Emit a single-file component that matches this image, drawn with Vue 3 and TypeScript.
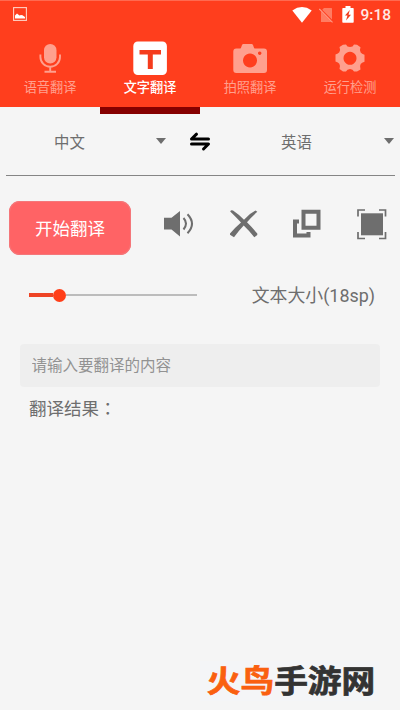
<script setup lang="ts">
import { ref } from 'vue'

interface Tab { id: string; label: string }
const tabs: Tab[] = [
  { id: 'voice', label: '语音翻译' },
  { id: 'text', label: '文字翻译' },
  { id: 'photo', label: '拍照翻译' },
  { id: 'check', label: '运行检测' },
]
const active = ref('text')
const size = ref(18)
const source = ref('')
</script>

<template>
  <div class="screen">
    <header class="header">
      <div class="status">
        <svg class="shot" width="14" height="14" viewBox="0 0 14 14">
          <rect x=".6" y=".6" width="12.8" height="12.8" fill="none" stroke="#ffd0c4" stroke-width="1.1" />
          <path d="M2 11.5V8.500l2-2 2.500 2L8 8l1.500.3L12 10v1.500z" fill="#fff" />
        </svg>
        <svg class="wifi" width="20" height="16" viewBox="0 0 20 16">
          <path d="M.3 3.500Q10-3.400 19.700 3.500L10 15.800z" fill="#fff" />
        </svg>
        <svg class="sim" width="15" height="16" viewBox="0 0 15 16">
          <path d="M5 1h7.500q.5 0 .5.500V15H2V4z" fill="#ff7c62" />
          <path d="M.5 1.500L14 15" stroke="#ff3e1f" stroke-width="2" />
          <path d="M.3 2L13.500 15.400" stroke="#ff9a85" stroke-width="1.100" />
        </svg>
        <svg class="battery" width="12" height="17" viewBox="0 0 12 17">
          <path d="M3.500 0h5v2H11q.7 0 .7.700V16q0 .7-.7.700H1q-.7 0-.7-.7V2.700Q.3 2 1 2h2.500z" fill="#fff" />
          <path d="M7.800 4L3 9.500h2.500L4 14.500 9 8.700H6.500z" fill="#f03a1c" />
        </svg>
        <span class="clock">9:18</span>
      </div>
      <nav class="tabs">
        <button v-for="tab in tabs" :key="tab.id" class="tab" :class="{ active: active === tab.id }" @click="active = tab.id">
          <svg v-if="tab.id === 'voice'" width="36" height="36" viewBox="0 0 36 36">
            <rect x="12" y="4" width="12.500" height="19.500" rx="6.200" fill="currentColor" />
            <path d="M8.400 14.500v2.500a9.800 9.800 0 0 0 19.600 0v-2.500M18.200 26.500v5M12.500 31.800h11.500" fill="none" stroke="currentColor" stroke-width="1.900" />
          </svg>
          <svg v-else-if="tab.id === 'text'" width="36" height="36" viewBox="0 0 36 36">
            <rect x="1.300" y="1.500" width="33.600" height="33.500" rx="4.500" fill="currentColor" />
            <path d="M7.500 10h21.500v4.500H20.800V29h-5V14.500H7.500z" fill="#f53c1d" />
          </svg>
          <svg v-else-if="tab.id === 'photo'" width="36" height="36" viewBox="0 0 36 36">
            <path fill-rule="evenodd" d="M4.300 8.500H8q1 0 1.300-1.500l.7-2q.4-1 1.500-1h8q1.100 0 1.500 1l.7 2q.3 1.500 1.300 1.500h9q3 0 3 3v18.500q0 3-3 3H4.300q-3 0-3-3V11.500q0-3 3-3zM18 13.500a7 7 0 1 0 .01 0zM27.700 11.500a1.700 1.700 0 1 0 .01 0z" fill="currentColor" />
          </svg>
          <svg v-else width="36" height="36" viewBox="0 0 36 36">
            <path fill-rule="evenodd" d="M11 4.800l3-.2q1 2.500 4 2.500t4-2.500l3 .2 3.500 2.400q-1.200 3 .2 5.300 1 1.600 3.800 2.300v7q-2.800.7-3.800 2.300-1.400 2.300-.2 5.300L25 31.500h-3q-1-2.600-4-2.600t-4 2.600h-3l-3.500-2.400q1.200-3-.2-5.300-1-1.600-3.800-2.300v-7q2.800-.7 3.800-2.300 1.400-2.300.2-5.300zM18 11.800a6.500 6.500 0 1 0 .01 0z" fill="currentColor" />
          </svg>
          <span>{{ tab.label }}</span>
        </button>
      </nav>
    </header>
    <div class="track">
      <i v-for="tab in tabs" :key="tab.id" :class="{ current: active === tab.id }"></i>
    </div>

    <section class="languages">
      <div class="language first"><span>中文</span><b class="caret"></b></div>
      <svg class="swap" width="22" height="22" viewBox="0 0 22 22">
        <path d="M19.500 9H2.500L7.500 4.200M2.500 14h17L14.500 19" fill="none" stroke="#000" stroke-width="3" stroke-linejoin="round" stroke-linecap="round" />
      </svg>
      <div class="language second"><span>英语</span><b class="caret"></b></div>
    </section>

    <section class="actions">
      <button class="start">开始翻译</button>
      <div class="tools">
        <svg width="32" height="32" viewBox="0 0 32 32">
          <path d="M1 9.800h7.500L17 3v25.500L8.500 21.500H1z" fill="#6e6e6e" />
          <path d="M20.500 10q5 5.500 0 11.500M24.500 6.200q9 9.500 0 19" fill="none" stroke="#6e6e6e" stroke-width="2" />
        </svg>
        <svg width="32" height="32" viewBox="0 0 32 32">
          <path d="M2.200 3.400Q3 1.500 5 2.500q6 4 11 9.200Q21.500 5.500 27.500 2.600l1.800 1.200Q23.500 9 19 14.300q5.500 5.400 10.300 11.200v1.500l-3 2.200Q21 22.500 15.700 17.500 10.500 23 6 29.300l-4-2.600v-1.300Q7 19.500 13 14.400 7.500 8.500 2.200 3.400z" fill="#6e6e6e" />
        </svg>
        <svg width="32" height="32" viewBox="0 0 32 32">
          <path d="M12.500 3.700h15v16h-15zM8 13.500H4v14h13.500V24" fill="none" stroke="#6e6e6e" stroke-width="4" />
        </svg>
        <svg width="32" height="32" viewBox="0 0 32 32">
          <rect x="5" y="5.300" width="22" height="22" fill="#6e6e6e" />
          <path d="M2 8.500V2h7M23 2h6.500v6.500M2 24v6.500h7M23 30.500h6.500V24" fill="none" stroke="#6e6e6e" stroke-width="1.700" />
        </svg>
      </div>
    </section>

    <section class="sizer">
      <div class="slider"><div class="filled"></div><div class="thumb"></div><div class="rest"></div></div>
      <span class="size">文本大小({{ size }}sp)</span>
    </section>

    <input v-model="source" class="source" placeholder="请输入要翻译的内容" />
    <p class="result">翻译结果<span class="colon">：</span></p>

    <footer class="brand"><div class="plate"><div class="mark"><span class="fire">火鸟</span><span>手游网</span></div></div></footer>
  </div>
</template>

<style>
body { background: #f5f5f5; }
</style>

<style scoped>
.screen {
  box-sizing: border-box;
  display: flex;
  flex-direction: column;
  width: 400px;
  height: 710px;
  background: #f5f5f5;
  color: #6e6e6e;
  font-family: Roboto, "Noto Sans CJK SC", sans-serif;
  overflow: hidden;
}
button, input { border: 0; padding: 0; margin: 0; font-family: inherit; }
svg { display: block; flex: none; }
.header { height: 107px; background: #ff3e1d; box-shadow: inset 0 1px #ff6a50; flex: none; }
.status { display: flex; align-items: center; height: 28px; padding: 0 9px 0 13px; }
.wifi { margin-left: 265px; margin-top: 1px; }
.sim { margin-left: 7px; margin-top: 1px; }
.battery { margin-left: 8px; }
.clock { margin-left: auto; padding-top: 2px; color: #ffe9e4; font-size: 15.500px; font-weight: 500; line-height: 28px; }
.tabs { display: grid; grid-template-columns: repeat(4, 100px); padding-top: 12px; }
.tab { display: flex; flex-direction: column; align-items: center; background: none; color: #ffa08e; font-size: 13.200px; line-height: 20px; }
.tab span { margin-top: 2px; }
.tab.active { color: #fff; }
.tab.active span { font-weight: 500; }
.track { display: grid; grid-template-columns: repeat(4, 100px); height: 7px; flex: none; }
.track .current { background: #850000; }
.languages {
  display: flex;
  align-items: center;
  box-sizing: border-box;
  height: 62px;
  margin: 0 5px 0 6px;
  padding-bottom: 7px;
  border-bottom: 1px solid #858585;
  font-size: 15.400px;
  flex: none;
}
.language { display: flex; align-items: center; justify-content: space-between; flex: none; box-sizing: border-box; }
.first { width: 160px; padding-left: 48px; }
.second { width: 120px; padding-left: 7px; margin-left: auto; margin-right: 1px; }
.swap { margin: 0 0 0 23px; }
.caret { border: 5px solid transparent; border-top: 6px solid #6e6e6e; border-bottom: 0; }
.actions { display: flex; align-items: flex-start; height: 104px; padding: 25px 12px 0 9px; box-sizing: border-box; flex: none; }
.start { width: 122px; height: 54px; padding-bottom: 2px; border-radius: 11px; background: #ff6365; box-shadow: inset 0 0 0 1px #f4777a; color: #fff; font-size: 17.500px; flex: none; }
.tools { display: flex; flex: 1; justify-content: space-between; padding: 7px 0 0 32px; }
.tools svg:nth-child(2) { margin-left: 2px; }
.tools svg:nth-child(3) { margin-right: 2.500px; }
.sizer { display: flex; align-items: center; justify-content: space-between; height: 30px; padding: 0 25px 0 29px; flex: none; }
.slider { display: flex; align-items: center; width: 168px; }
.filled { width: 24px; height: 4px; background: #ee4425; }
.thumb { width: 13px; height: 13px; border-radius: 50%; background: #ff3e18; }
.rest { flex: 1; height: 2px; background: #bcbcbc; }
.size { padding-bottom: 2px; font-size: 17.900px; }
.source { box-sizing: border-box; height: 43px; margin: 34px 20px 0; padding: 1px 11.500px 0; border-radius: 4px; background: #eee; color: #6e6e6e; font-size: 15.500px; outline: 0; flex: none; }
.source::placeholder { color: #929292; opacity: 1; }
.result { margin: 8px 29px 0; font-size: 17.500px; line-height: 26px; }
.colon { font-family: "Noto Sans CJK TC", sans-serif; }
.brand { display: flex; justify-content: flex-end; margin-top: auto; padding: 0 21px 9px 0; }
.plate { display: flex; width: 179px; height: 40px; align-items: center; justify-content: center; background: #f4f5f7; }
.mark { padding: 2px 0 0 3px; color: #333; font-size: 33.700px; font-weight: 700; line-height: 40px; white-space: nowrap; transform: scaleY(.9); -webkit-text-stroke: .8px currentColor; }
.fire { color: #fa6010; }
</style>
